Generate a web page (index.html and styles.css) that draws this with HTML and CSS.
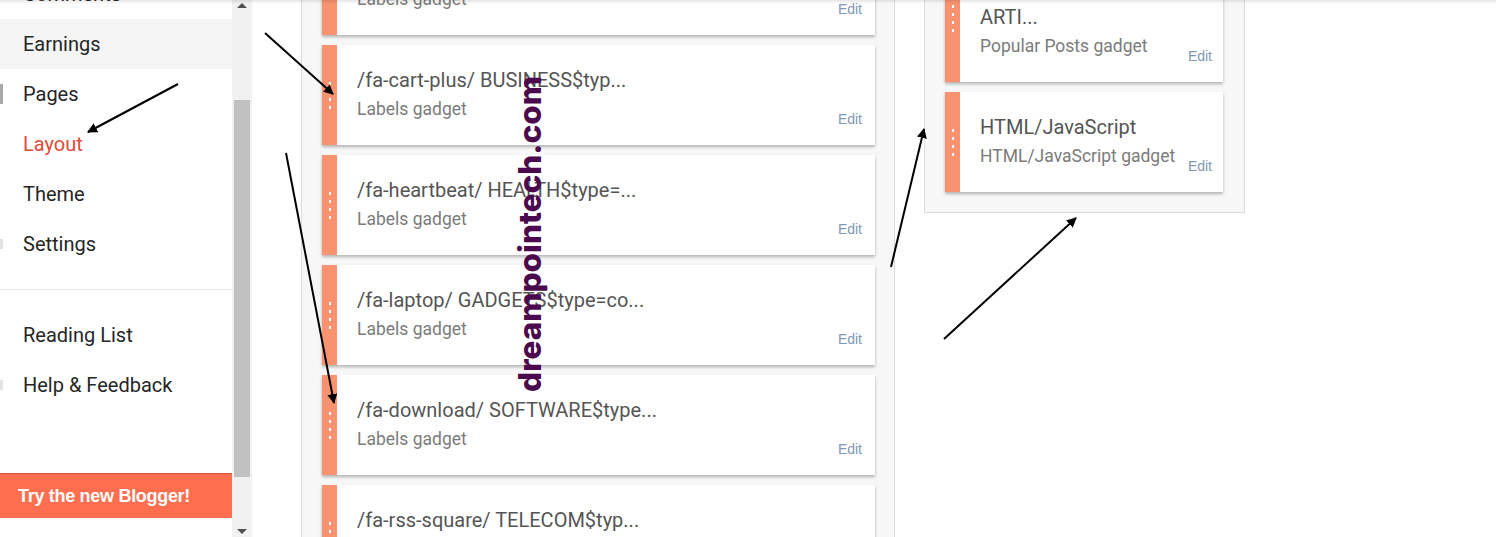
FILE: index.html
```html
<!DOCTYPE html>
<html lang="en">
<head>
  <meta charset="UTF-8">
  <meta name="viewport" content="width=device-width, initial-scale=1.0">
  <title>Blogger Layout</title>
  <link rel="stylesheet" href="styles.css">
</head>
<body>
  <div class="app">
    <!-- left navigation -->
    <aside class="sidebar">
      <nav class="nav">
        <a class="nav-item">Comments</a>
        <a class="nav-item active-row">Earnings</a>
        <a class="nav-item mark">Pages</a>
        <a class="nav-item current">Layout</a>
        <a class="nav-item">Theme</a>
        <a class="nav-item mark-faint">Settings</a>
        <hr class="nav-divider">
        <a class="nav-item">Reading List</a>
        <a class="nav-item mark-faint">Help &amp; Feedback</a>
      </nav>
      <button class="try-btn">Try the new Blogger!</button>
    </aside>

    <div class="scrollbar">
      <span class="arrow up"></span>
      <div class="thumb"></div>
      <span class="arrow down"></span>
    </div>

    <!-- layout editor -->
    <main class="editor">
      <section class="column main-col">
        <div class="gadget">
          <div class="handle"><span class="dots"></span></div>
          <div class="card">
            <div class="title">/fa-newspaper-o/ NEWS$type=...</div>
            <div class="meta"><span class="sub">Labels gadget</span><a class="edit">Edit</a></div>
          </div>
        </div>
        <div class="gadget">
          <div class="handle"><span class="dots"></span></div>
          <div class="card">
            <div class="title">/fa-cart-plus/ BUSINESS$typ...</div>
            <div class="meta"><span class="sub">Labels gadget</span><a class="edit">Edit</a></div>
          </div>
        </div>
        <div class="gadget">
          <div class="handle"><span class="dots"></span></div>
          <div class="card">
            <div class="title">/fa-heartbeat/ HEALTH$type=...</div>
            <div class="meta"><span class="sub">Labels gadget</span><a class="edit">Edit</a></div>
          </div>
        </div>
        <div class="gadget">
          <div class="handle"><span class="dots"></span></div>
          <div class="card">
            <div class="title">/fa-laptop/ GADGETS$type=co...</div>
            <div class="meta"><span class="sub">Labels gadget</span><a class="edit">Edit</a></div>
          </div>
        </div>
        <div class="gadget">
          <div class="handle"><span class="dots"></span></div>
          <div class="card">
            <div class="title">/fa-download/ SOFTWARE$type...</div>
            <div class="meta"><span class="sub">Labels gadget</span><a class="edit">Edit</a></div>
          </div>
        </div>
        <div class="gadget">
          <div class="handle"><span class="dots"></span></div>
          <div class="card">
            <div class="title">/fa-rss-square/ TELECOM$typ...</div>
            <div class="meta"><span class="sub">Labels gadget</span><a class="edit">Edit</a></div>
          </div>
        </div>
      </section>

      <section class="column side-col">
        <div class="gadget">
          <div class="handle"><span class="dots"></span></div>
          <div class="card">
            <div class="title wrap">/fa-fire/ TRENDING<br>ARTI...</div>
            <div class="meta tight"><span class="sub">Popular Posts gadget</span><a class="edit">Edit</a></div>
          </div>
        </div>
        <div class="gadget">
          <div class="handle"><span class="dots"></span></div>
          <div class="card">
            <div class="title">HTML/JavaScript</div>
            <div class="meta"><span class="sub">HTML/JavaScript gadget</span><a class="edit">Edit</a></div>
          </div>
        </div>
      </section>
    </main>
  </div>

  <div class="top-shadow"></div>

  <!-- annotation arrows -->
  <svg class="arrows" width="1496" height="537" viewBox="0 0 1496 537">
    <defs>
      <marker id="head" viewBox="0 0 10 10" refX="9" refY="5" markerWidth="5" markerHeight="5" orient="auto">
        <path d="M0 0 L10 5 L0 10 z" fill="#000"/>
      </marker>
    </defs>
    <g stroke="#000" stroke-width="2" fill="none" marker-end="url(#head)">
      <line x1="265" y1="33" x2="333" y2="94"/>
      <line x1="178" y1="84" x2="88" y2="132"/>
      <line x1="286" y1="153" x2="334" y2="403"/>
      <line x1="891" y1="267" x2="924" y2="129"/>
      <line x1="944" y1="339" x2="1076" y2="218"/>
    </g>
  </svg>

  <div class="watermark">dreampointech.com</div>
</body>
</html>
```

FILE: styles.css
```css
html, body {
  margin: 0;
  height: 100%;
  overflow: hidden;
  background: #fff;
}

body {
  position: relative;
  font-family: Roboto, "Noto Sans", Arial, sans-serif;
}

.app {
  display: flex;
  height: 537px;
}

/* Sidebar */
.sidebar {
  width: 232px;
  flex-shrink: 0;
  display: flex;
  flex-direction: column;
  background: #fff;
}

.nav {
  display: flex;
  flex-direction: column;
  margin-top: -31px;
}

.nav-item {
  position: relative;
  display: block;
  height: 50px;
  line-height: 50px;
  padding-left: 23px;
  font-size: 20px;
  color: #262626;
}

.nav-item.active-row {
  background: #f5f5f5;
}

.nav-item.current {
  color: #dd4b39;
}

.nav-item.mark::before,
.nav-item.mark-faint::before {
  content: "";
  position: absolute;
  left: 0;
  top: 15px;
  width: 3px;
  height: 20px;
  background: #a8a8a8;
}

.nav-item.mark-faint::before {
  top: 20px;
  height: 10px;
  background: #e2e2e2;
}

.nav-divider {
  border: 0;
  border-top: 1px solid #e5e5e5;
  margin: 20px 0;
}

.try-btn {
  margin-top: 63px;
  height: 45px;
  border: 0;
  border-top: 1px solid #e0583b;
  background: #ff6e4e;
  color: #fff;
  font-family: "Liberation Sans", Arial, sans-serif;
  font-weight: bold;
  font-size: 18px;
  text-align: left;
  padding: 0 0 0 18px;
  letter-spacing: -0.3px;
}

/* Scrollbar */
.scrollbar {
  width: 20px;
  flex-shrink: 0;
  background: #f1f1f1;
  display: flex;
  flex-direction: column;
  align-items: center;
}

.thumb {
  width: 16px;
  height: 377px;
  margin-top: 92px;
  background: #c1c1c1;
}

.arrow {
  width: 0;
  height: 0;
  border-left: 5px solid transparent;
  border-right: 5px solid transparent;
}

.arrow.up {
  margin-top: 3px;
  border-bottom: 5px solid #505050;
}

.arrow.down {
  margin-top: 52px;
  border-top: 5px solid #505050;
}

/* Editor */
.editor {
  flex: 1;
  display: flex;
  align-items: flex-start;
  padding-left: 49px;
  gap: 29px;
}

.column {
  background: #f7f7f7;
  border: 1px solid #dcdcdc;
  padding: 20px 19px 20px 20px;
  display: flex;
  flex-direction: column;
  gap: 10px;
}

.main-col {
  width: 553px;
  margin-top: -86px;
  height: 700px;
}

.side-col {
  width: 278px;
  margin-top: -67px;
  padding-right: 21px;
}

.gadget {
  display: flex;
  box-shadow: 0 2px 3px rgba(0, 0, 0, 0.28);
}

.handle {
  width: 15px;
  flex-shrink: 0;
  background: #f9926f;
  display: flex;
  align-items: center;
  justify-content: center;
}

.dots {
  width: 2px;
  height: 27px;
  background: linear-gradient(#fff 3px, transparent 3px) 0 0 / 2px 8px repeat-y;
}

.card {
  flex: 1;
  background: #fff;
  padding: 24px 13px 18px 20px;
}

.title {
  font-size: 20px;
  line-height: 22px;
  color: #555;
}

.title.wrap {
  line-height: 26px;
}

.meta {
  display: flex;
  justify-content: space-between;
  margin-top: 8px;
}

.meta.tight {
  margin-top: 6px;
}

.sub {
  font-size: 17.5px;
  line-height: 20px;
  color: #7b7b7b;
}

.edit {
  margin-top: 12px;
  font-family: "Liberation Sans", Arial, sans-serif;
  font-size: 14px;
  line-height: 16px;
  color: #8197b4;
}

.side-col .card {
  padding-right: 11px;
}

/* Overlays */
.top-shadow {
  position: absolute;
  top: 0;
  left: 0;
  right: 0;
  height: 4px;
  background: linear-gradient(rgba(0, 0, 0, 0.1), rgba(0, 0, 0, 0));
}

.arrows {
  position: absolute;
  top: 0;
  left: 0;
  pointer-events: none;
}

.watermark {
  position: absolute;
  left: 529px;
  top: 234px;
  transform: translate(-50%, -50%) rotate(-90deg);
  font-family: Inter, "Open Sans", sans-serif;
  font-weight: 800;
  font-size: 31.5px;
  color: #4b0a4d;
  white-space: nowrap;
}
```
